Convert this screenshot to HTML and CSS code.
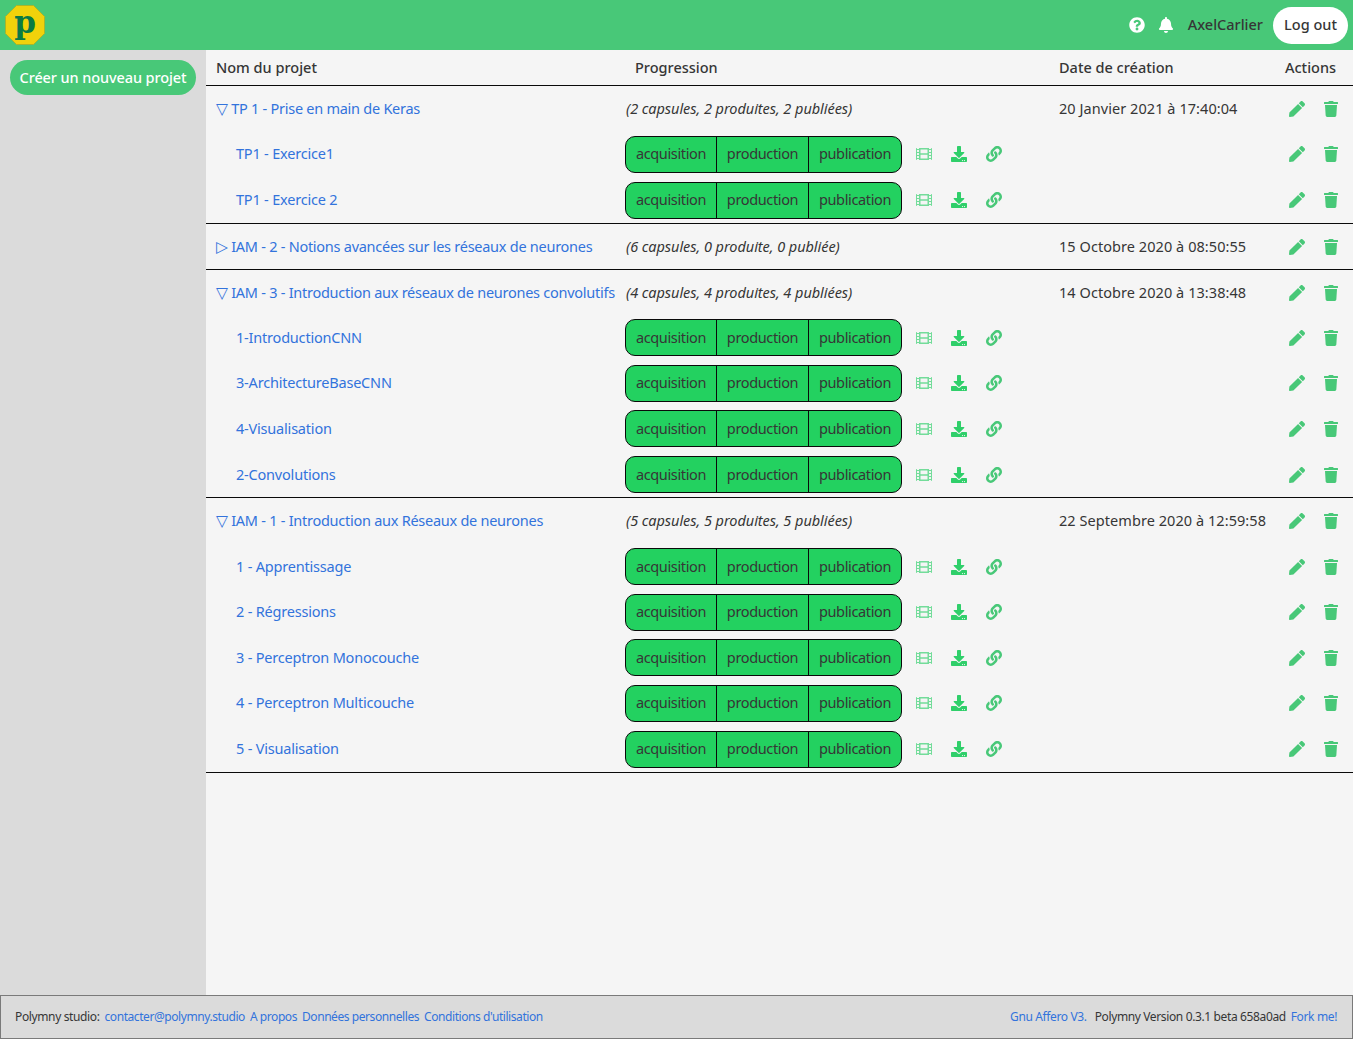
FILE: index.html
```html
<!DOCTYPE html>
<html lang="fr">
<head>
  <meta charset="UTF-8" />
  <meta name="viewport" content="width=device-width, initial-scale=1.0" />
  <title>Polymny Studio</title>
  <link rel="stylesheet" href="styles.css">
</head>

<body>
  <!-- Icon sprites -->
  <svg class="sprites" aria-hidden="true">
    <symbol id="i-film" viewBox="0 0 512 512"><path d="M488 64h-8v20c0 6.6-5.4 12-12 12h-40c-6.6 0-12-5.4-12-12V64H96v20c0 6.6-5.4 12-12 12H44c-6.6 0-12-5.4-12-12V64h-8C10.7 64 0 74.7 0 88v336c0 13.3 10.7 24 24 24h8v-20c0-6.6 5.4-12 12-12h40c6.6 0 12 5.4 12 12v20h320v-20c0-6.6 5.4-12 12-12h40c6.6 0 12 5.4 12 12v20h8c13.3 0 24-10.7 24-24V88c0-13.3-10.7-24-24-24zM96 372c0 6.6-5.4 12-12 12H44c-6.6 0-12-5.4-12-12v-40c0-6.6 5.4-12 12-12h40c6.6 0 12 5.4 12 12v40zm0-96c0 6.6-5.4 12-12 12H44c-6.6 0-12-5.4-12-12v-40c0-6.6 5.4-12 12-12h40c6.6 0 12 5.4 12 12v40zm0-96c0 6.6-5.4 12-12 12H44c-6.6 0-12-5.4-12-12v-40c0-6.6 5.4-12 12-12h40c6.6 0 12 5.4 12 12v40zm272 208c0 6.6-5.4 12-12 12H156c-6.6 0-12-5.4-12-12v-96c0-6.6 5.4-12 12-12h200c6.6 0 12 5.4 12 12v96zm0-168c0 6.6-5.4 12-12 12H156c-6.6 0-12-5.4-12-12v-96c0-6.6 5.4-12 12-12h200c6.6 0 12 5.4 12 12v96zm112 152c0 6.6-5.4 12-12 12h-40c-6.6 0-12-5.4-12-12v-40c0-6.6 5.4-12 12-12h40c6.6 0 12 5.4 12 12v40zm0-96c0 6.6-5.4 12-12 12h-40c-6.6 0-12-5.4-12-12v-40c0-6.6 5.4-12 12-12h40c6.6 0 12 5.4 12 12v40zm0-96c0 6.6-5.4 12-12 12h-40c-6.6 0-12-5.4-12-12v-40c0-6.6 5.4-12 12-12h40c6.6 0 12 5.4 12 12v40z"/></symbol>
    <symbol id="i-download" viewBox="0 0 512 512"><path d="M216 0h80c13.3 0 24 10.7 24 24v168h87.7c17.8 0 26.7 21.5 14.1 34.1L269.7 378.3c-7.5 7.5-19.8 7.5-27.3 0L90.1 226.1c-12.6-12.6-3.7-34.1 14.1-34.1H192V24c0-13.3 10.7-24 24-24zm296 376v112c0 13.3-10.7 24-24 24H24c-13.3 0-24-10.7-24-24V376c0-13.3 10.7-24 24-24h146.7l49 49c20.1 20.1 52.5 20.1 72.6 0l49-49H488c13.3 0 24 10.7 24 24zm-124 88c0-11-9-20-20-20s-20 9-20 20 9 20 20 20 20-9 20-20zm64 0c0-11-9-20-20-20s-20 9-20 20 9 20 20 20 20-9 20-20z"/></symbol>
    <symbol id="i-link" viewBox="0 0 512 512"><path d="M326.612 185.391c59.747 59.809 58.927 155.698.36 214.59-.11.12-.24.25-.36.37l-67.2 67.2c-59.27 59.27-155.699 59.262-214.96 0-59.27-59.26-59.27-155.7 0-214.96l37.106-37.106c9.84-9.84 26.786-3.3 27.294 10.606.648 17.722 3.826 35.527 9.69 52.721 1.986 5.822.567 12.262-3.783 16.612l-13.087 13.087c-28.026 28.026-28.905 73.66-1.155 101.96 28.024 28.579 74.086 28.749 102.325.51l67.2-67.19c28.191-28.191 28.073-73.757 0-101.83-3.701-3.694-7.429-6.564-10.341-8.569a16.037 16.037 0 0 1-6.947-12.606c-.396-10.567 3.348-21.456 11.698-29.806l21.054-21.055c5.521-5.521 14.182-6.199 20.584-1.731a152.482 152.482 0 0 1 20.522 17.197zM467.547 44.449c-59.261-59.262-155.69-59.27-214.96 0l-67.2 67.2c-.12.12-.25.25-.36.37-58.566 58.892-59.387 154.781.36 214.59a152.454 152.454 0 0 0 20.521 17.196c6.402 4.468 15.064 3.789 20.584-1.731l21.054-21.055c8.35-8.35 12.094-19.239 11.698-29.806a16.037 16.037 0 0 0-6.947-12.606c-2.912-2.005-6.64-4.875-10.341-8.569-28.073-28.073-28.191-73.639 0-101.83l67.2-67.19c28.239-28.239 74.3-28.069 102.325.51 27.75 28.3 26.872 73.934-1.155 101.96l-13.087 13.087c-4.35 4.35-5.769 10.79-3.783 16.612 5.864 17.194 9.042 34.999 9.69 52.721.509 13.906 17.454 20.446 27.294 10.606l37.106-37.106c59.271-59.259 59.271-155.699.001-214.959z"/></symbol>
    <symbol id="i-pencil" viewBox="0 0 512 512"><path d="M290.74 93.24l128.02 128.02-277.99 277.99-114.14 12.6C11.35 513.54-1.56 500.62.14 485.34l12.7-114.22 277.9-277.88zm207.2-19.06l-60.11-60.11c-18.75-18.75-49.16-18.75-67.91 0l-56.55 56.55 128.02 128.02 56.55-56.55c18.75-18.76 18.75-49.16 0-67.91z"/></symbol>
    <symbol id="i-trash" viewBox="0 0 448 512"><path d="M432 32H312l-9.4-18.7A24 24 0 0 0 281.1 0H166.8a23.72 23.72 0 0 0-21.4 13.3L136 32H16A16 16 0 0 0 0 48v32a16 16 0 0 0 16 16h416a16 16 0 0 0 16-16V48a16 16 0 0 0-16-16zM53.2 467a48 48 0 0 0 47.9 45h245.8a48 48 0 0 0 47.9-45L416 128H32z"/></symbol>
    <symbol id="i-question" viewBox="0 0 512 512"><path d="M504 256c0 136.997-111.043 248-248 248S8 392.997 8 256C8 119.083 119.043 8 256 8s248 111.083 248 248zM262.655 90c-54.497 0-89.255 22.957-116.549 63.758-3.536 5.286-2.353 12.415 2.715 16.258l34.699 26.31c5.205 3.947 12.621 3.008 16.665-2.122 17.864-22.658 30.113-35.797 57.303-35.797 20.429 0 45.698 13.148 45.698 32.958 0 14.976-12.363 22.667-32.534 33.976C247.128 238.528 216 254.941 216 296v4c0 6.627 5.373 12 12 12h56c6.627 0 12-5.373 12-12v-1.333c0-28.462 83.186-29.647 83.186-106.667 0-58.002-60.165-102-116.531-102zM256 338c-25.365 0-46 20.635-46 46 0 25.364 20.635 46 46 46s46-20.636 46-46c0-25.365-20.635-46-46-46z"/></symbol>
    <symbol id="i-bell" viewBox="0 0 448 512"><path d="M224 512c35.32 0 63.97-28.65 63.97-64H160.03c0 35.35 28.65 64 63.97 64zm215.39-149.71c-19.32-20.76-55.47-51.99-55.47-154.29 0-77.7-54.48-139.9-127.94-155.16V32c0-17.67-14.32-32-31.98-32s-31.98 14.33-31.98 32v20.84C118.56 68.1 64.08 130.3 64.08 208c0 102.3-36.15 133.53-55.47 154.29-6 6.45-8.66 14.16-8.61 21.71.11 16.4 12.98 32 32.1 32h383.8c19.12 0 32-15.6 32.1-32 .05-7.55-2.61-15.27-8.61-21.71z"/></symbol>
  </svg>

  <nav class="navbar">
    <a href="#" class="logo">
      <svg viewBox="0 0 40 40" width="40" height="40">
        <polygon points="11.5,0.5 28.5,0.5 39.5,11.5 39.5,28.5 28.5,39.5 11.5,39.5 0.5,28.5 0.5,11.5" fill="#f1d20b" stroke="#a8b52a" stroke-width="1"/>
      </svg>
      <span class="logo-letter">p</span>
    </a>
    <div class="navbar-end">
      <svg class="nav-icon nav-question"><use href="#i-question"/></svg>
      <svg class="nav-icon nav-bell"><use href="#i-bell"/></svg>
      <span class="username">AxelCarlier</span>
      <a href="#" class="logout">Log out</a>
    </div>
  </nav>

  <div class="main">
    <aside class="sidebar">
      <a href="#" class="new-project">Créer un nouveau projet</a>
    </aside>

    <section class="content">
      <table class="projects">
        <colgroup>
          <col class="col-name"><col class="col-progress"><col class="col-date"><col class="col-actions">
        </colgroup>
        <thead>
          <tr><th>Nom du projet</th><th>Progression</th><th>Date de création</th><th>Actions</th></tr>
        </thead>
        <tbody>
          <tr class="project">
            <td><a href="#"><span class="arrow">▽</span> TP 1 - Prise en main de Keras</a></td>
            <td class="summary">(2 capsules, 2 produites, 2 publiées)</td>
            <td class="date">20 Janvier 2021 à 17:40:04</td>
            <td class="actions"><svg class="ic pencil"><use href="#i-pencil"/></svg><svg class="ic trash"><use href="#i-trash"/></svg></td>
          </tr>
          <tr>
            <td class="capsule"><a href="#">TP1 - Exercice1</a></td>
            <td class="progress"><div class="steps"><div class="bar"><a href="#">acquisition</a><a href="#">production</a><a href="#">publication</a></div><svg class="ic film"><use href="#i-film"/></svg><svg class="ic dl"><use href="#i-download"/></svg><svg class="ic lnk"><use href="#i-link"/></svg></div></td>
            <td></td>
            <td class="actions"><svg class="ic pencil"><use href="#i-pencil"/></svg><svg class="ic trash"><use href="#i-trash"/></svg></td>
          </tr>
          <tr class="last">
            <td class="capsule"><a href="#">TP1 - Exercice 2</a></td>
            <td class="progress"><div class="steps"><div class="bar"><a href="#">acquisition</a><a href="#">production</a><a href="#">publication</a></div><svg class="ic film"><use href="#i-film"/></svg><svg class="ic dl"><use href="#i-download"/></svg><svg class="ic lnk"><use href="#i-link"/></svg></div></td>
            <td></td>
            <td class="actions"><svg class="ic pencil"><use href="#i-pencil"/></svg><svg class="ic trash"><use href="#i-trash"/></svg></td>
          </tr>

          <tr class="project last">
            <td><a href="#"><span class="arrow">▷</span> IAM - 2 - Notions avancées sur les réseaux de neurones</a></td>
            <td class="summary">(6 capsules, 0 produite, 0 publiée)</td>
            <td class="date">15 Octobre 2020 à 08:50:55</td>
            <td class="actions"><svg class="ic pencil"><use href="#i-pencil"/></svg><svg class="ic trash"><use href="#i-trash"/></svg></td>
          </tr>

          <tr class="project">
            <td><a href="#"><span class="arrow">▽</span> IAM - 3 - Introduction aux réseaux de neurones convolutifs</a></td>
            <td class="summary">(4 capsules, 4 produites, 4 publiées)</td>
            <td class="date">14 Octobre 2020 à 13:38:48</td>
            <td class="actions"><svg class="ic pencil"><use href="#i-pencil"/></svg><svg class="ic trash"><use href="#i-trash"/></svg></td>
          </tr>
          <tr>
            <td class="capsule"><a href="#">1-IntroductionCNN</a></td>
            <td class="progress"><div class="steps"><div class="bar"><a href="#">acquisition</a><a href="#">production</a><a href="#">publication</a></div><svg class="ic film"><use href="#i-film"/></svg><svg class="ic dl"><use href="#i-download"/></svg><svg class="ic lnk"><use href="#i-link"/></svg></div></td>
            <td></td>
            <td class="actions"><svg class="ic pencil"><use href="#i-pencil"/></svg><svg class="ic trash"><use href="#i-trash"/></svg></td>
          </tr>
          <tr>
            <td class="capsule"><a href="#">3-ArchitectureBaseCNN</a></td>
            <td class="progress"><div class="steps"><div class="bar"><a href="#">acquisition</a><a href="#">production</a><a href="#">publication</a></div><svg class="ic film"><use href="#i-film"/></svg><svg class="ic dl"><use href="#i-download"/></svg><svg class="ic lnk"><use href="#i-link"/></svg></div></td>
            <td></td>
            <td class="actions"><svg class="ic pencil"><use href="#i-pencil"/></svg><svg class="ic trash"><use href="#i-trash"/></svg></td>
          </tr>
          <tr>
            <td class="capsule"><a href="#">4-Visualisation</a></td>
            <td class="progress"><div class="steps"><div class="bar"><a href="#">acquisition</a><a href="#">production</a><a href="#">publication</a></div><svg class="ic film"><use href="#i-film"/></svg><svg class="ic dl"><use href="#i-download"/></svg><svg class="ic lnk"><use href="#i-link"/></svg></div></td>
            <td></td>
            <td class="actions"><svg class="ic pencil"><use href="#i-pencil"/></svg><svg class="ic trash"><use href="#i-trash"/></svg></td>
          </tr>
          <tr class="last">
            <td class="capsule"><a href="#">2-Convolutions</a></td>
            <td class="progress"><div class="steps"><div class="bar"><a href="#">acquisition</a><a href="#">production</a><a href="#">publication</a></div><svg class="ic film"><use href="#i-film"/></svg><svg class="ic dl"><use href="#i-download"/></svg><svg class="ic lnk"><use href="#i-link"/></svg></div></td>
            <td></td>
            <td class="actions"><svg class="ic pencil"><use href="#i-pencil"/></svg><svg class="ic trash"><use href="#i-trash"/></svg></td>
          </tr>

          <tr class="project">
            <td><a href="#"><span class="arrow">▽</span> IAM - 1 - Introduction aux Réseaux de neurones</a></td>
            <td class="summary">(5 capsules, 5 produites, 5 publiées)</td>
            <td class="date">22 Septembre 2020 à 12:59:58</td>
            <td class="actions"><svg class="ic pencil"><use href="#i-pencil"/></svg><svg class="ic trash"><use href="#i-trash"/></svg></td>
          </tr>
          <tr>
            <td class="capsule"><a href="#">1 - Apprentissage</a></td>
            <td class="progress"><div class="steps"><div class="bar"><a href="#">acquisition</a><a href="#">production</a><a href="#">publication</a></div><svg class="ic film"><use href="#i-film"/></svg><svg class="ic dl"><use href="#i-download"/></svg><svg class="ic lnk"><use href="#i-link"/></svg></div></td>
            <td></td>
            <td class="actions"><svg class="ic pencil"><use href="#i-pencil"/></svg><svg class="ic trash"><use href="#i-trash"/></svg></td>
          </tr>
          <tr>
            <td class="capsule"><a href="#">2 - Régressions</a></td>
            <td class="progress"><div class="steps"><div class="bar"><a href="#">acquisition</a><a href="#">production</a><a href="#">publication</a></div><svg class="ic film"><use href="#i-film"/></svg><svg class="ic dl"><use href="#i-download"/></svg><svg class="ic lnk"><use href="#i-link"/></svg></div></td>
            <td></td>
            <td class="actions"><svg class="ic pencil"><use href="#i-pencil"/></svg><svg class="ic trash"><use href="#i-trash"/></svg></td>
          </tr>
          <tr>
            <td class="capsule"><a href="#">3 - Perceptron Monocouche</a></td>
            <td class="progress"><div class="steps"><div class="bar"><a href="#">acquisition</a><a href="#">production</a><a href="#">publication</a></div><svg class="ic film"><use href="#i-film"/></svg><svg class="ic dl"><use href="#i-download"/></svg><svg class="ic lnk"><use href="#i-link"/></svg></div></td>
            <td></td>
            <td class="actions"><svg class="ic pencil"><use href="#i-pencil"/></svg><svg class="ic trash"><use href="#i-trash"/></svg></td>
          </tr>
          <tr>
            <td class="capsule"><a href="#">4 - Perceptron Multicouche</a></td>
            <td class="progress"><div class="steps"><div class="bar"><a href="#">acquisition</a><a href="#">production</a><a href="#">publication</a></div><svg class="ic film"><use href="#i-film"/></svg><svg class="ic dl"><use href="#i-download"/></svg><svg class="ic lnk"><use href="#i-link"/></svg></div></td>
            <td></td>
            <td class="actions"><svg class="ic pencil"><use href="#i-pencil"/></svg><svg class="ic trash"><use href="#i-trash"/></svg></td>
          </tr>
          <tr class="last">
            <td class="capsule"><a href="#">5 - Visualisation</a></td>
            <td class="progress"><div class="steps"><div class="bar"><a href="#">acquisition</a><a href="#">production</a><a href="#">publication</a></div><svg class="ic film"><use href="#i-film"/></svg><svg class="ic dl"><use href="#i-download"/></svg><svg class="ic lnk"><use href="#i-link"/></svg></div></td>
            <td></td>
            <td class="actions"><svg class="ic pencil"><use href="#i-pencil"/></svg><svg class="ic trash"><use href="#i-trash"/></svg></td>
          </tr>
        </tbody>
      </table>
    </section>
  </div>

  <footer class="footer">
    <div class="footer-group footer-links">
      <span>Polymny studio:</span>
      <a href="#">contacter@polymny.studio</a>
      <a href="#">A propos</a>
      <a href="#">Données personnelles</a>
      <a href="#">Conditions d'utilisation</a>
    </div>
    <div class="footer-group">
      <a href="#" class="license">Gnu Affero V3.</a>
      <span>Polymny Version 0.3.1 beta 658a0ad</span>
      <a href="#">Fork me!</a>
    </div>
  </footer>
</body>
</html>
```

FILE: styles.css
```css
* {
  box-sizing: border-box;
}
html, body {
  margin: 0;
  height: 100%;
}
body {
  display: flex;
  flex-direction: column;
  min-height: 1039px;
  font-family: "Noto Sans", "Open Sans", sans-serif;
  font-size: 14.5px;
  color: #363636;
  background: #f5f5f5;
}
a {
  color: #3273dc;
  text-decoration: none;
}
.sprites {
  display: none;
}

/* top bar */
.navbar {
  height: 50px;
  flex: none;
  background: #48c878;
  display: flex;
  align-items: center;
  justify-content: space-between;
  padding: 0 5px;
}
.logo {
  display: block;
  position: relative;
  width: 40px;
  height: 40px;
}
.logo svg {
  display: block;
}
.logo-letter {
  position: absolute;
  top: 0;
  left: 0;
  width: 40px;
  text-align: center;
  line-height: 34px;
  font-family: "DejaVu Serif", "Liberation Serif", serif;
  font-weight: 700;
  font-size: 31px;
  color: #0a7a44;
}
.navbar-end {
  display: flex;
  align-items: center;
}
.nav-icon {
  width: 16px;
  height: 16px;
  fill: #fff;
}
.nav-question {
  margin-right: 13px;
}
.nav-bell {
  margin-right: 14px;
}
.username {
  margin-right: 10px;
  padding-bottom: 2px;
  font-weight: 500;
}
.logout {
  height: 37px;
  width: 75px;
  border-radius: 19px;
  background: #fff;
  color: #363636;
  font-weight: 500;
  padding-bottom: 2px;
  display: flex;
  align-items: center;
  justify-content: center;
}

/* sidebar + content */
.main {
  flex: 1;
  display: flex;
  min-height: 0;
}
.sidebar {
  width: 206px;
  flex: none;
  background: #dbdbdb;
  padding: 10px;
}
.new-project {
  display: flex;
  align-items: center;
  justify-content: center;
  height: 35px;
  padding-bottom: 2px;
  border-radius: 18px;
  background: #48c878;
  color: #fff;
  font-weight: 500;
  letter-spacing: -0.1px;
}
.content {
  flex: 1;
  min-width: 0;
}

/* project table */
.projects {
  width: 1147px;
  table-layout: fixed;
  border-collapse: collapse;
}
.col-name { width: 419px; }
.col-progress { width: 424px; }
.col-date { width: 226px; }
.col-actions { width: 78px; }
.projects th {
  height: 35.4px;
  padding: 0 10px 1px;
  text-align: left;
  font-weight: 500;
  border-bottom: 1px solid #0a0a0a;
}
.projects td {
  height: 45.55px;
  padding: 0 10px 1px;
  white-space: nowrap;
}
.projects tr.last td {
  height: 46.55px;
  border-bottom: 1px solid #0a0a0a;
}
.projects tr.project.last td {
  height: 46px;
}
.projects td a {
  letter-spacing: -0.2px;
}
.projects .project td a {
  letter-spacing: -0.26px;
}
.projects td.capsule {
  padding-left: 30px;
}
.projects td.summary {
  padding-left: 1px;
  letter-spacing: -0.05px;
}
.projects td.progress {
  padding: 1px 0 0;
}
.date {
  letter-spacing: 0.06px;
}
.arrow {
  font-family: "DejaVu Sans", sans-serif;
  font-size: 15.5px;
}
.summary {
  font-style: italic;
}

/* capsule steps */
.steps {
  display: flex;
  align-items: center;
}
.bar {
  display: flex;
  width: 277px;
  height: 37px;
  flex: none;
  border: 1px solid #0a0a0a;
  border-radius: 10px;
  background: #23d160;
  overflow: hidden;
}
.projects td .bar a {
  width: 92px;
  flex: none;
  display: flex;
  align-items: center;
  justify-content: center;
  padding-bottom: 2px;
  color: #363636;
  letter-spacing: -0.36px;
  border-left: 1px solid #0a0a0a;
}
.projects td .bar a:first-child {
  width: 90px;
  border-left: 0;
}
.projects td .bar a:last-child {
  width: auto;
  flex: 1;
}
.ic {
  width: 16px;
  height: 16px;
  flex: none;
  fill: #2fcf6a;
}
.film {
  margin-left: 14px;
  opacity: 0.65;
}
.dl {
  margin-left: 19px;
}
.lnk {
  margin-left: 19px;
  fill: #48c878;
}
.actions .ic {
  vertical-align: top;
  margin-top: 3px;
  fill: #48c878;
}
.actions .pencil {
  margin-left: 4px;
}
.actions .trash {
  margin-left: 19px;
  width: 14px;
}

/* footer */
.footer {
  height: 44px;
  flex: none;
  background: #dbdbdb;
  border: 1px solid #7a7a7a;
  display: flex;
  align-items: center;
  justify-content: space-between;
  padding: 0 15px 1px 14px;
  font-size: 12px;
  letter-spacing: -0.37px;
}
.footer-group {
  display: flex;
  gap: 5px;
}
.footer-links a {
  letter-spacing: -0.43px;
}
.license {
  margin-right: 3px;
}
```
